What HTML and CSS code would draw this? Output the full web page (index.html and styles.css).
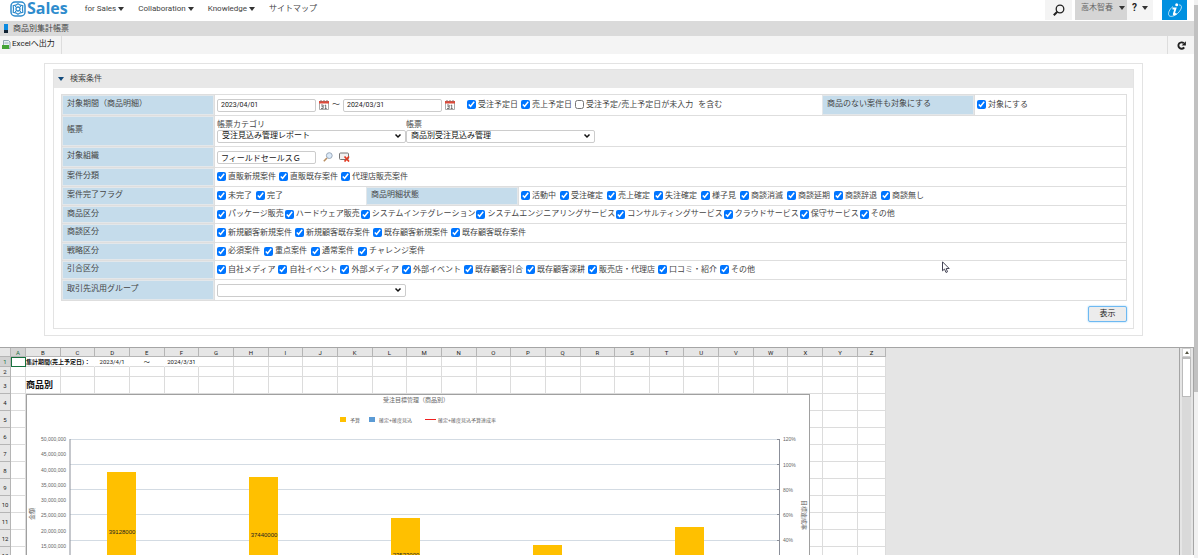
FILE: index.html
```html
<!DOCTYPE html>
<html lang="ja">
<head>
<meta charset="utf-8">
<title>商品別集計帳票</title>
<link rel="stylesheet" href="styles.css">
</head>
<body>
<svg class="defs" aria-hidden="true">
  <symbol id="calendar" viewBox="0 0 10 10">
    <path d="M0.5 1.5h9v8h-9z" fill="#fff" stroke="#aaa"/>
    <path d="M0 1h10v2.500H0z" fill="#dd4a3a"/>
    <path d="M1.500 0h1v2h-1zM4.500 0h1v2h-1zM7.500 0h1v2h-1z" fill="#8a6a6a"/>
    <path d="M2 5h2.200v3.500H2M2.500 6.700H4M6.700 5v3.500M5.700 5.500l1-.5M5.700 8.500h2" fill="none" stroke="#555" stroke-width=".8"/>
  </symbol>
  <symbol id="chevron" viewBox="0 0 8 6"><path d="M1.500 1.500 4 4l2.500-2.500" fill="none" stroke="#111" stroke-width="1.500"/></symbol>
  <symbol id="caret" viewBox="0 0 6 4"><path d="M0 0h6L3 4z"/></symbol>
</svg>
<div class="app">
  <div class="page">
    <header class="header">
      <a class="logo" href="#">
        <svg class="logo-mark" viewBox="0 0 16 16" fill="none" stroke="#2f8ccd">
          <rect x="1" y="1" width="14" height="14" rx="4" stroke-width="1.500"/>
          <circle cx="8" cy="8" r="2" stroke-width="1.300"/>
          <path d="M8 2.800l2.300 1.400 2.500.5-.3 3.300.3 3.300-2.500.5L8 13.200l-2.300-1.400-2.500-.5.3-3.300-.3-3.300 2.500-.5z" stroke-width="1.200"/>
          <path d="M5 5l1.500 1.500M11 5 9.500 6.500M5 11l1.500-1.500M11 11 9.500 9.500"/>
        </svg>
        <span>Sales</span>
      </a>
      <nav class="nav">
        <a href="#">for Sales<svg class="caret"><use href="#caret"/></svg></a>
        <a href="#">Collaboration<svg class="caret"><use href="#caret"/></svg></a>
        <a href="#">Knowledge<svg class="caret"><use href="#caret"/></svg></a>
        <a href="#">サイトマップ</a>
      </nav>
      <div class="tools">
        <button class="tool tool-search" aria-label="検索"><svg class="icon12" viewBox="0 0 12 12" fill="none" stroke="#222"><circle cx="7" cy="5" r="3.800" stroke-width="1.300"/><path d="M4.300 7.700.8 11.200" stroke-width="2"/></svg></button>
        <button class="tool tool-user">高木智春<svg class="caret"><use href="#caret"/></svg></button>
        <button class="tool tool-help"><b>?</b><svg class="caret"><use href="#caret"/></svg></button>
        <button class="tool tool-info" aria-label="情報"><svg class="info-icon" viewBox="0 0 16 16" fill="none" stroke="#fff"><path d="M6 4.500C2.500 7 .5 11.500 2 13.500s6.500.5 10-3.500 3-7.500 0-7" stroke-width=".7"/><path d="M5.500 6.500h3L6.800 12q-.2 1.500 2.700-.5" stroke-width="1.800"/><circle cx="9.700" cy="2.700" r="1.500" fill="#fff" stroke="none"/></svg></button>
      </div>
    </header>
    <div class="titlebar"><span class="title-mark"></span><h1>商品別集計帳票</h1></div>
    <div class="toolbar">
      <button class="export"><svg class="icon9" viewBox="0 0 9 9"><path d="M1.500.5h5L8 2v6.500H1.500z" fill="#e7f0f5" stroke="#8ea3ad"/><path d="M0 5h7v4H0z" fill="#43a336"/><path d="M2.500 3h4" stroke="#9ab"/></svg>Excelへ出力</button>
      <button class="reload" aria-label="再読み込み"><svg class="icon9" viewBox="0 0 9 9"><path d="M7.200 6.400A3.200 3.200 0 1 1 6.800 2.200" fill="none" stroke="#222" stroke-width="1.900"/><path d="M8.900 .3v4.200H4.600z" fill="#222"/></svg></button>
    </div>

    <main class="panel">
      <form class="search">
        <h2 class="search-head"><svg class="caret"><use href="#caret"/></svg>検索条件</h2>
        <div class="search-body">
          <div class="criteria">
            <div class="row tall">
              <div class="label">対象期間（商品明細）</div>
              <div class="value wide">
                <input class="field date" type="text" value="2023/04/01" aria-label="開始日">
                <svg class="cal"><use href="#calendar"/></svg><span class="tilde">～</span>
                <input class="field date" type="text" value="2024/03/31" aria-label="終了日">
                <svg class="cal cal-end"><use href="#calendar"/></svg>
                <div class="checks">
                  <label><input type="checkbox" checked>受注予定日</label>
                  <label><input type="checkbox" checked>売上予定日</label>
                  <label><input type="checkbox">受注予定/売上予定日が未入力</label>
                  <span class="suffix">を含む</span>
                </div>
              </div>
              <div class="label">商品のない案件も対象にする</div>
              <div class="value"><div class="checks"><label><input type="checkbox" checked>対象にする</label></div></div>
            </div>
            <div class="row report">
              <div class="label">帳票</div>
              <div class="value full">
                <label class="pick">帳票カテゴリ<span class="select"><select><option>受注見込み管理レポート</option></select><svg><use href="#chevron"/></svg></span></label>
                <label class="pick">帳票<span class="select"><select><option>商品別受注見込み管理</option></select><svg><use href="#chevron"/></svg></span></label>
              </div>
            </div>
            <div class="row tall">
              <div class="label">対象組織</div>
              <div class="value full">
                <input class="field" type="text" value="フィールドセールスＧ" aria-label="対象組織">
                <svg class="org-search" viewBox="0 0 10 10"><path d="M4 6 .8 9.200" stroke="#b98f62" stroke-width="1.600"/><circle cx="6.300" cy="3.600" r="2.900" fill="#dbeaf8" stroke="#9aa7b8"/></svg>
                <svg class="org-clear" viewBox="0 0 11 10"><rect x=".5" y="1" width="9" height="6.500" rx="1" fill="#f1f1f1" stroke="#777"/><path d="M5.500 4.500l4.500 5M10 4.500l-4.500 5" stroke="#e03a22" stroke-width="1.700"/></svg>
              </div>
            </div>
            <div class="row">
              <div class="label">案件分類</div>
              <div class="value full"><div class="checks">
                <label><input type="checkbox" checked>直販新規案件</label>
                <label><input type="checkbox" checked>直販既存案件</label>
                <label><input type="checkbox" checked>代理店販売案件</label>
              </div></div>
            </div>
            <div class="row">
              <div class="label">案件完了フラグ</div>
              <div class="value"><div class="checks loose">
                <label><input type="checkbox" checked>未完了</label>
                <label><input type="checkbox" checked>完了</label>
              </div></div>
              <div class="label">商品明細状態</div>
              <div class="value wide"><div class="checks loose">
                <label><input type="checkbox" checked>活動中</label>
                <label><input type="checkbox" checked>受注確定</label>
                <label><input type="checkbox" checked>売上確定</label>
                <label><input type="checkbox" checked>失注確定</label>
                <label><input type="checkbox" checked>様子見</label>
                <label><input type="checkbox" checked>商談消滅</label>
                <label><input type="checkbox" checked>商談延期</label>
                <label><input type="checkbox" checked>商談辞退</label>
                <label><input type="checkbox" checked>商談無し</label>
              </div></div>
            </div>
            <div class="row short">
              <div class="label">商品区分</div>
              <div class="value full"><div class="checks dense">
                <label><input type="checkbox" checked>パッケージ販売</label>
                <label><input type="checkbox" checked>ハードウェア販売</label>
                <label><input type="checkbox" checked>システムインテグレーション</label>
                <label><input type="checkbox" checked>システムエンジニアリングサービス</label>
                <label><input type="checkbox" checked>コンサルティングサービス</label>
                <label><input type="checkbox" checked>クラウドサービス</label>
                <label><input type="checkbox" checked>保守サービス</label>
                <label><input type="checkbox" checked>その他</label>
              </div></div>
            </div>
            <div class="row">
              <div class="label">商談区分</div>
              <div class="value full"><div class="checks">
                <label><input type="checkbox" checked>新規顧客新規案件</label>
                <label><input type="checkbox" checked>新規顧客既存案件</label>
                <label><input type="checkbox" checked>既存顧客新規案件</label>
                <label><input type="checkbox" checked>既存顧客既存案件</label>
              </div></div>
            </div>
            <div class="row short">
              <div class="label">戦略区分</div>
              <div class="value full"><div class="checks loose">
                <label><input type="checkbox" checked>必須案件</label>
                <label><input type="checkbox" checked>重点案件</label>
                <label><input type="checkbox" checked>通常案件</label>
                <label><input type="checkbox" checked>チャレンジ案件</label>
              </div></div>
            </div>
            <div class="row">
              <div class="label">引合区分</div>
              <div class="value full"><div class="checks">
                <label><input type="checkbox" checked>自社メディア</label>
                <label><input type="checkbox" checked>自社イベント</label>
                <label><input type="checkbox" checked>外部メディア</label>
                <label><input type="checkbox" checked>外部イベント</label>
                <label><input type="checkbox" checked>既存顧客引合</label>
                <label><input type="checkbox" checked>既存顧客深耕</label>
                <label><input type="checkbox" checked>販売店・代理店</label>
                <label><input type="checkbox" checked>口コミ・紹介</label>
                <label><input type="checkbox" checked>その他</label>
              </div></div>
            </div>
            <div class="row tall">
              <div class="label">取引先汎用グループ</div>
              <div class="value full"><span class="select"><select aria-label="取引先汎用グループ"><option></option></select><svg><use href="#chevron"/></svg></span></div>
            </div>
          </div>
          <div class="actions"><button class="submit" type="button">表示</button></div>
        </div>
      </form>
    </main>

    <section class="viewer">
      <div class="sheet">
        <table class="grid" id="grid"></table>
        <svg class="chart" viewBox="26 394 784 184">
          <rect class="chart-frame" x="26.500" y="394.500" width="783" height="190"/>
          <text class="t6" x="416" y="402" text-anchor="middle">受注目標管理（商品別）</text>
          <rect x="340" y="417" width="6" height="5" fill="#ffc000"/>
          <text class="t5" x="350" y="422">予算</text>
          <rect x="369" y="417" width="6" height="5" fill="#5b9bd5"/>
          <text class="t5" x="379" y="422">確定+確度見込</text>
          <rect x="425" y="419" width="11" height="1" fill="#f02020"/>
          <text class="t5" x="438" y="422">確定+確度見込予算達成率</text>
          <path class="lines" d="M70 439.500h710M70 464.500h710M70 489.500h710M70 514.500h710M70 540.500h710M70 565.500h710"/>
          <path class="axis" d="M70 439v145M779.500 439v145M777 439.500h3M777 464.500h3M777 489.500h3M777 514.500h3M777 540.500h3"/>
          <path fill="#ffc000" d="M107 472h29v112h-29zM249 477h29v107h-29zM391 518h29v66h-29zM533 545h29v39h-29zM675 527h29v57h-29z"/>
          <g class="t5" text-anchor="end">
            <text x="66" y="441">50,000,000</text><text x="66" y="456">45,000,000</text><text x="66" y="472">40,000,000</text><text x="66" y="487">35,000,000</text>
            <text x="66" y="502">30,000,000</text><text x="66" y="517">25,000,000</text><text x="66" y="533">20,000,000</text><text x="66" y="548">15,000,000</text>
          </g>
          <g class="t5">
            <text x="783" y="441">120%</text><text x="783" y="467">100%</text><text x="783" y="492">80%</text><text x="783" y="517">60%</text><text x="783" y="542">40%</text>
          </g>
          <g class="t6">
            <text transform="translate(34 520) rotate(-90)">金額</text>
            <text transform="translate(802 500) rotate(90)">目標達成率</text>
          </g>
          <g class="bar-label" text-anchor="middle">
            <text x="122" y="534">39128000</text><text x="264" y="537">37440000</text><text x="406" y="557">23533000</text>
          </g>
        </svg>
      </div>
      <div class="sheet-scroll">
        <span class="scroll-up"><svg viewBox="0 0 4 3"><path d="M0 3h4L2 0z" fill="#554"/></svg></span>
        <span class="scroll-thumb"></span>
      </div>
    </section>
  </div>
  <div class="page-scroll"><span class="page-thumb"></span></div>
  <svg class="pointer" viewBox="0 0 8 13"><path d="M.5.8v9l2-1.800 1.500 3.500 1.500-.7L4.200 7.500h3z" fill="#fff" stroke="#445"/></svg>
</div>
<script src="grid.js"></script>
</body>
</html>
```
FILE: styles.css
```css
* { box-sizing: border-box; }
body {
  margin: 0;
  font: 8px/10px Roboto, "Noto Sans CJK JP", sans-serif;
  color: #444;
  background: #fff;
}
button, input, select { font: inherit; color: inherit; margin: 0; }
button { border: 0; background: none; padding: 0; }
a { color: inherit; text-decoration: none; }
h1, h2 { margin: 0; font-size: 8px; font-weight: 400; }
svg { display: block; flex: none; }
.defs { position: absolute; width: 0; height: 0; }
.caret { width: 6px; height: 4px; fill: #333; }
.icon9 { width: 9px; height: 9px; }
.icon12 { width: 12px; height: 12px; }

.app { display: flex; height: 100vh; position: relative; overflow: hidden; }
.page { flex: 1; min-width: 0; display: flex; flex-direction: column; padding-bottom: 3px; }

.header { display: flex; align-items: flex-start; height: 21px; padding: 0 7px 0 10px; }
.logo { display: flex; align-items: center; gap: 1px; height: 17px; color: #2f8ccd; font: 700 16px/17px "Open Sans", sans-serif; }
.logo-mark { width: 16px; height: 16px; }
.nav { display: flex; gap: 14px; margin-left: 17px; line-height: 17px; }
.nav a { display: flex; align-items: center; gap: 2px; }
.tools { display: flex; margin-left: auto; }
.tool { display: flex; align-items: center; justify-content: center; height: 20px; background: #f4f4f4; }
.tool-search { width: 27px; margin-right: 3px; }
.tool-user { width: 52px; padding: 0 0 4px 4px; gap: 6px; background: #d5d5d5; color: #666; }
.tool-help { width: 26px; padding-bottom: 4px; gap: 5px; margin-right: 9px; color: #222; font-size: 10px; }
.tool-info { width: 25px; background: #0090e0; }
.info-icon { width: 16px; height: 16px; }

.titlebar { display: flex; align-items: center; gap: 5px; height: 15px; padding-left: 4px; background: #dadada; }
.title-mark { width: 4px; height: 9px; background: linear-gradient(#0a8ae0 65%, #123 65%); }
.toolbar { display: flex; justify-content: space-between; height: 18px; background: #f4f4f4; color: #222; }
.export { display: flex; align-items: center; gap: 1px; padding: 0 6px 2px 2px; border-right: 1px solid #ddd; }
.reload { display: flex; align-items: center; justify-content: center; width: 27px; border-left: 1px solid #ddd; }

.panel { margin: 9px 51px 11px 44px; padding: 5px 8px 6px; border: 1px solid #e3e3e3; }
.search { border: 1px solid #e3e3e3; }
.search-head { display: flex; align-items: center; gap: 6px; height: 18px; padding-left: 4px; background: #e8e8e8; }
.search-head .caret { fill: #124a7c; }
.search-body { padding: 6px 6px 6px 7px; }
.criteria { border: 1px solid #dedede; border-bottom: 0; }
.row { display: grid; grid-template-columns: repeat(7, minmax(0, 1fr)); min-height: 19px; border-bottom: 1px solid #dedede; }
.row.tall { min-height: 21px; }
.row.short { min-height: 18px; }
.row.report { min-height: 31px; }
.label { display: flex; align-items: center; padding: 0 4px 2px; border: 1px solid #e3e7ea; background: #c5dceb; }
.value { display: flex; align-items: center; padding-left: 2px; border-left: 1px solid #dedede; }
.value.wide { grid-column: span 4; }
.value.full { grid-column: span 6; }
.field { width: 99px; height: 13px; padding: 0 3px; border: 1px solid #ccc; border-radius: 2px; background: #fff; color: #222; }
.field.date { font-size: 7px; }
.cal { width: 10px; height: 10px; margin-left: 3px; }
.cal-end { margin-right: 12px; }
.tilde { width: 14px; text-align: center; }
.checks { display: flex; gap: 3px; padding-bottom: 1px; white-space: nowrap; }
.checks.dense { gap: 1px; }
.checks.loose { gap: 4px; }
.checks label { display: flex; align-items: center; gap: 2px; }
.checks input { width: 9px; height: 9px; }
.suffix { margin-left: 2px; }
.pick { display: block; }
.select { display: grid; grid-template-columns: 177px 12px; align-items: center; width: 189px; }
.select select { grid-area: 1 / 1 / 2 / 3; appearance: none; height: 13px; padding: 0 4px; border: 1px solid #ccc; border-radius: 2px; background: #fff; color: #111; }
.select svg { grid-area: 1 / 2; width: 8px; height: 6px; pointer-events: none; }
.org-search { width: 10px; height: 10px; margin-left: 7px; }
.org-clear { width: 11px; height: 10px; margin-left: 6px; }
.actions { display: flex; justify-content: flex-end; padding-top: 5px; }
.submit { width: 39px; height: 16px; border: 1px solid #6db9f2; border-radius: 2px; background: #ececec; box-shadow: 0 0 2px #8ccaf7; color: #222; }

.viewer { flex: 1; min-height: 0; display: flex; border-top: 1px solid #a5a5a5; background: #e5e5e5; }
.sheet { position: relative; flex: 1; min-width: 0; overflow: hidden; }
.grid { width: 886px; table-layout: fixed; border-collapse: separate; border-spacing: 0; font-size: 6px; line-height: 7px; color: #222; background: #fff; }
.grid .col-head { width: 11px; }
.grid .col-a { width: 15px; }
.grid .col-z { width: 28px; }
.grid tr { height: 17px; }
.grid tr.short { height: 10px; }
.grid thead tr { height: 9px; }
.grid th, .grid td { padding: 0; border: solid #dcdcdc; border-width: 0 1px 1px 0; font-weight: 400; text-align: center; white-space: nowrap; }
.grid th { background: #e6e6e6; border-color: #b5b5b5; font-size: 6px; }
.grid th.active { background: #d2d2d2; color: #17713f; }
.grid td.open { border-right-color: transparent; }
.grid td.text { text-align: left; overflow: visible; font-weight: 700; color: #111; }
.grid td.heading { font-size: 9px; line-height: 12px; }
.grid td.selected { outline: 1px solid #17713f; outline-offset: -1px; }
.chart { position: absolute; left: 26px; top: 46px; width: 784px; height: 184px; }
.chart-frame { fill: #fff; stroke: #a0a0a0; }
.chart .lines { stroke: #d3dbe3; fill: none; }
.chart .axis { stroke: #8b8f99; fill: none; }
.chart text { font-family: "Liberation Sans", "Noto Sans CJK JP", sans-serif; fill: #666; }
.chart .t5 { font-size: 5px; }
.chart .t6 { font-size: 6px; }
.chart .bar-label text { font-size: 6px; fill: #222; }

.sheet-scroll { width: 15px; display: flex; flex-direction: column; padding-left: 2px; border-left: 1px solid #a5a5a5; border-right: 1px solid #a5a5a5; background: linear-gradient(90deg, #e5e5e5 2px, #d9d9d9 2px 11px, #e5e5e5 11px); }
.scroll-up { display: grid; place-items: center; width: 9px; height: 9px; background: #fff; border: 1px solid #d0d0d0; }
.scroll-up svg { width: 4px; height: 3px; }
.scroll-thumb { width: 9px; height: 40px; background: #fff; border: 1px solid #bbb; border-top-width: 2px; }
.page-scroll { width: 4px; padding-top: 5px; background: #f1f1f1; }
.page-thumb { display: block; height: 70%; background: #c1c1c1; }
.pointer { position: absolute; left: 942px; top: 261px; width: 8px; height: 13px; }
```
FILE: grid.js
```js
const letters = [..."ABCDEFGHIJKLMNOPQRSTUVWXYZ"];
const cells = {
  A1: ["", "selected"],
  B1: ["集計期間(売上予定日)：", "text open"],
  C1: ["", "open"],
  D1: ["2023/4/1", "open"],
  E1: ["～", "open"],
  F1: ["2024/3/31", "open"],
  B3: ["商品別", "text heading"],
};

const cols = ["head", ...letters.map((l) => l.toLowerCase())]
  .map((name) => `<col class="col-${name}">`).join("");
const head = letters.map((l) => `<th${l === "A" ? ' class="active"' : ""}>${l}</th>`).join("");

let body = "";
for (let row = 1; row <= 13; row++) {
  body += `<tr${row < 3 ? ' class="short"' : ""}><th${row === 1 ? ' class="active"' : ""}>${row}</th>`;
  for (const l of letters) {
    const [text, cls] = cells[l + row] || ["", ""];
    body += `<td${cls ? ` class="${cls}"` : ""}>${text}</td>`;
  }
  body += "</tr>";
}

document.getElementById("grid").innerHTML =
  `<colgroup>${cols}</colgroup><thead><tr><th></th>${head}</tr></thead><tbody>${body}</tbody>`;
```
